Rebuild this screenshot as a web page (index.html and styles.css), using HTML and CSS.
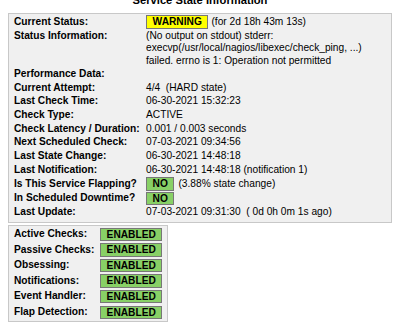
FILE: index.html
```html
<!DOCTYPE html>
<html>
<head>
<meta charset="utf-8">
<title>Service State Information</title>
<link rel="stylesheet" href="styles.css">
</head>
<body>
<div class="title">Service State Information</div>
<div class="box main">
  <div class="grid">
    <div class="var">Current Status:</div>
    <div class="val flex"><span class="badge warn">WARNING</span><span>(for 2d 18h 43m 13s)</span></div>

    <div class="var top">Status Information:</div>
    <div class="val multi">(No output on stdout) stderr:<br>execvp(/usr/local/nagios/libexec/check_ping, ...)<br>failed. errno is 1: Operation not permitted</div>

    <div class="var">Performance Data:</div>
    <div class="val"></div>

    <div class="var">Current Attempt:</div>
    <div class="val">4/4&nbsp;&nbsp;(HARD state)</div>

    <div class="var">Last Check Time:</div>
    <div class="val">06-30-2021 15:32:23</div>

    <div class="var">Check Type:</div>
    <div class="val">ACTIVE</div>

    <div class="var">Check Latency / Duration:</div>
    <div class="val">0.001&nbsp;/&nbsp;0.003 seconds</div>

    <div class="var">Next Scheduled Check:&nbsp;&nbsp;</div>
    <div class="val">07-03-2021 09:34:56</div>

    <div class="var">Last State Change:</div>
    <div class="val">06-30-2021 14:48:18</div>

    <div class="var">Last Notification:</div>
    <div class="val">06-30-2021 14:48:18&nbsp;(notification 1)</div>

    <div class="var">Is This Service Flapping?</div>
    <div class="val flex"><span class="badge ok">NO</span><span class="gap">(3.88% state change)</span></div>

    <div class="var">In Scheduled Downtime?</div>
    <div class="val flex"><span class="badge ok">NO</span></div>

    <div class="var">Last Update:</div>
    <div class="val">07-03-2021 09:31:30&nbsp;&nbsp;( 0d 0h 0m 1s ago)</div>
  </div>
</div>
<div class="box sub">
  <div class="subgrid">
    <div class="var">Active Checks:</div><div><span class="badge ok">ENABLED</span></div>
    <div class="var">Passive Checks:</div><div><span class="badge ok">ENABLED</span></div>
    <div class="var">Obsessing:</div><div><span class="badge ok">ENABLED</span></div>
    <div class="var">Notifications:</div><div><span class="badge ok">ENABLED</span></div>
    <div class="var">Event Handler:</div><div><span class="badge ok">ENABLED</span></div>
    <div class="var">Flap Detection:</div><div><span class="badge ok">ENABLED</span></div>
  </div>
</div>
</body>
</html>
```
FILE: styles.css
```css
html, body {
  background: #ffffff;
}
body {
  margin: 0 8px;
  font-family: "Liberation Sans", Arial, sans-serif;
  font-size: 10.2px;
  color: #000000;
}
.title {
  font-weight: bold;
  font-size: 11.2px;
  line-height: 13px;
  text-align: center;
  margin-top: -6px;
  margin-bottom: 6px;
}
.box {
  background: #f0f0f0;
  border: 1px solid #c8c8c8;
  box-sizing: border-box;
}
.main {
  padding: 1px 5px 3px;
}
.grid {
  display: grid;
  grid-template-columns: 132px 1fr;
  align-items: center;
}
.var, .val {
  line-height: 12.9px;
  padding: 0.4px 0;
  white-space: nowrap;
  min-height: 12.9px;
}
.var {
  font-weight: bold;
}
.top {
  align-self: start;
}
.multi {
  line-height: 12.5px;
}
.flex {
  display: flex;
  align-items: center;
  gap: 3px;
}
.flex .gap {
  margin-left: 1px;
}
.badge {
  display: inline-block;
  border: 1px solid #777777;
  padding: 0 5.6px;
  font-weight: bold;
  line-height: 11.4px;
}
.warn {
  background: #ffff00;
}
.ok {
  background: #88d066;
}
.sub {
  width: 160px;
  margin-top: 2px;
  padding: 1.5px 5px;
}
.subgrid {
  display: grid;
  grid-template-columns: 86px auto;
  row-gap: 1.9px;
  align-items: center;
  justify-items: start;
}
.subgrid > div {
  display: flex;
}
```
